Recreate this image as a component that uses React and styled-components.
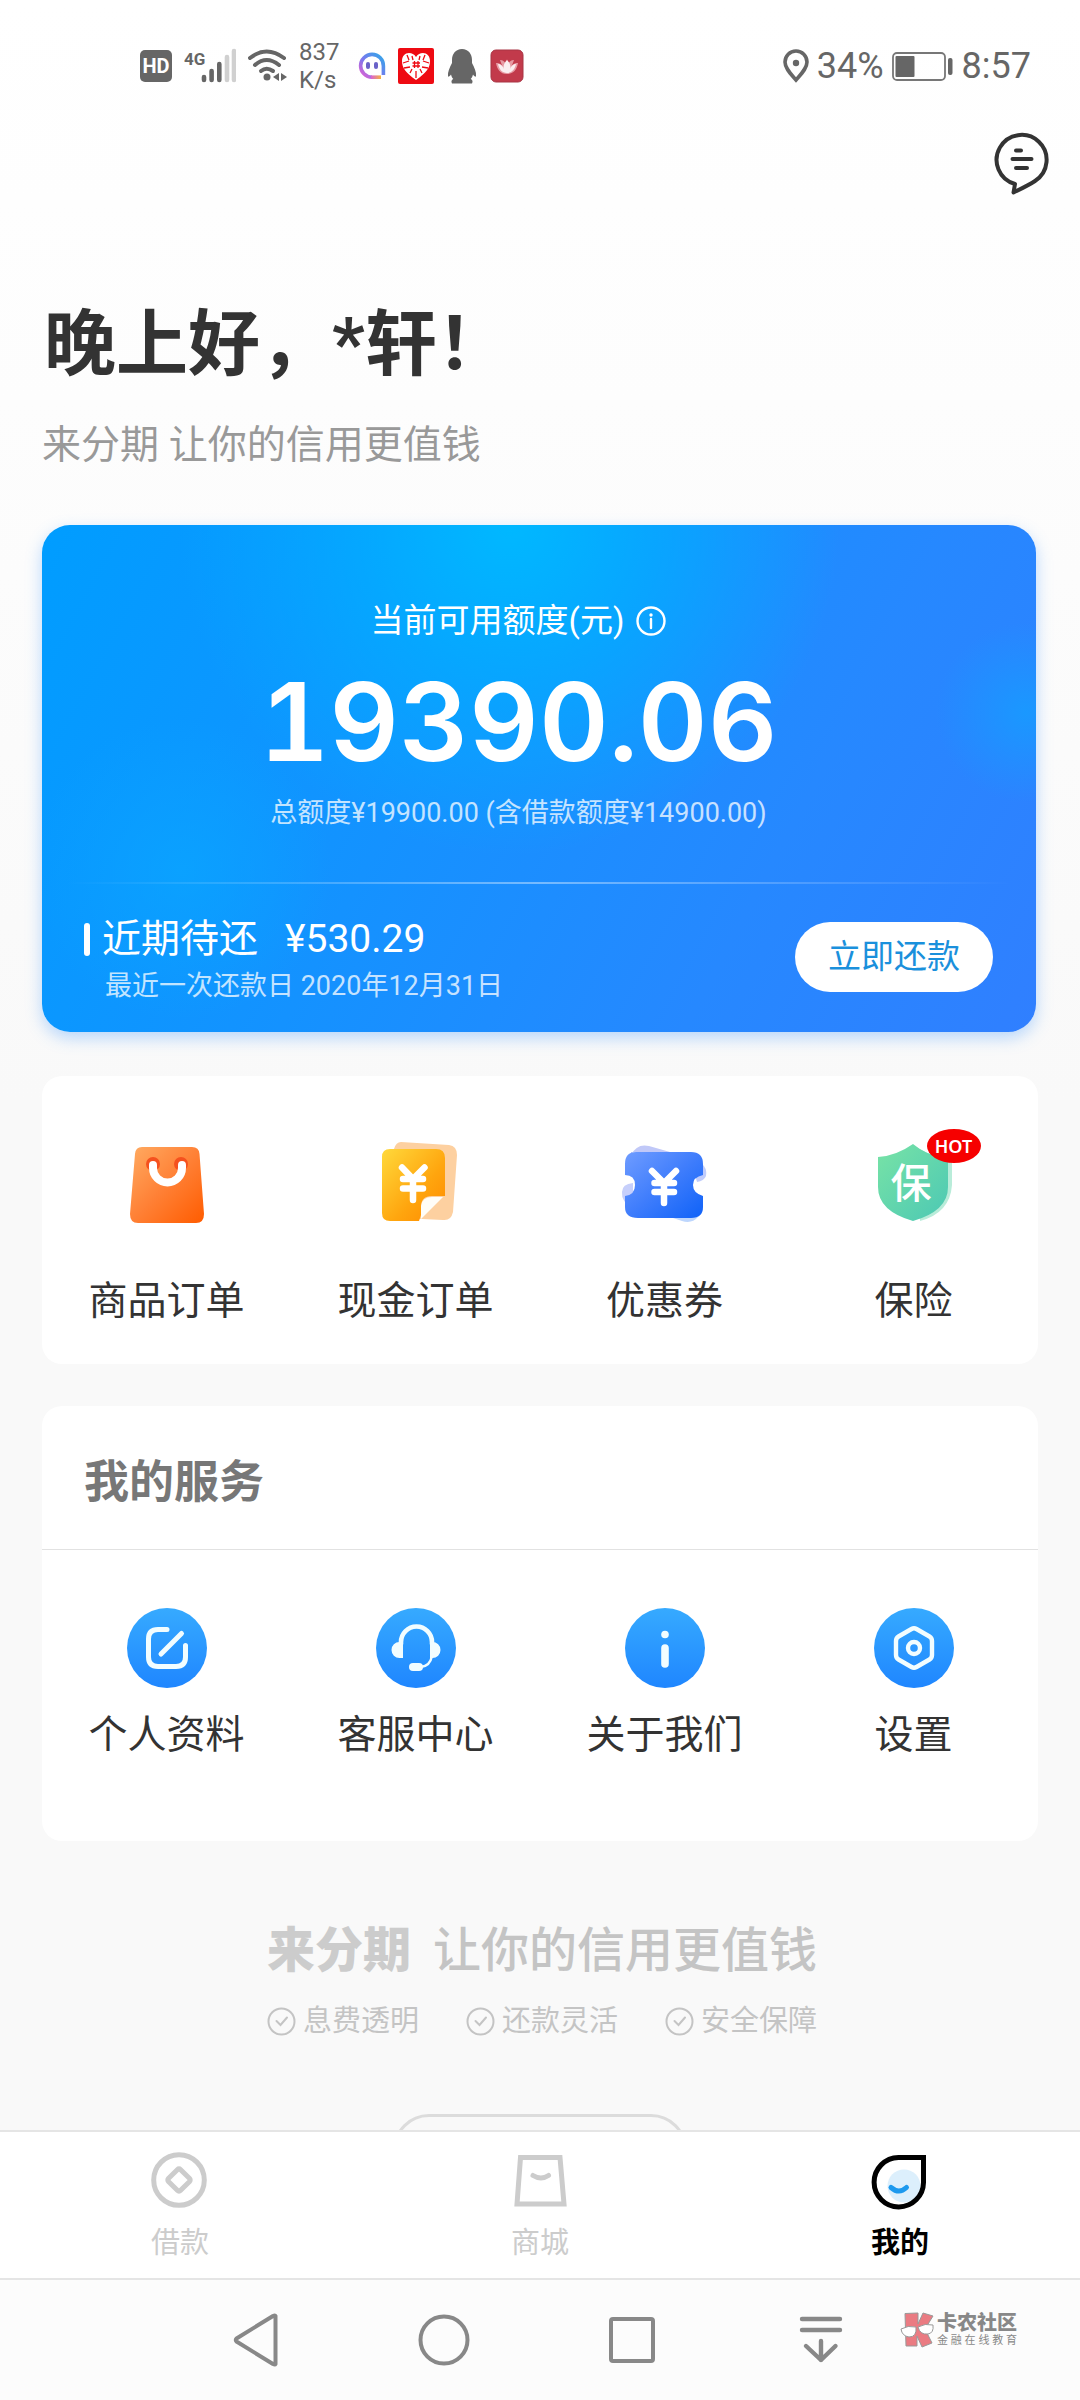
import React, { useState } from "react";
import styled, { createGlobalStyle } from "styled-components";

const GlobalStyle = createGlobalStyle`
  * {
    box-sizing: border-box;
  }

  body {
    margin: 0;
    font-family: Roboto, "Noto Sans CJK SC", sans-serif;
    color: #333;
  }

  button {
    border: 0;
    padding: 0;
    background: none;
    font: inherit;
    color: inherit;
    cursor: pointer;
  }

  svg {
    display: block;
    flex: none;
  }

  h1, h2, p {
    margin: 0;
  }
`;

const Screen = styled.div`
  display: flex;
  flex-direction: column;
  height: 100vh;
  background: linear-gradient(#ffffff 0, #fdfdfd 400px, #f9f9f9 1100px);
`;

const StatusBar = styled.header`
  display: flex;
  justify-content: space-between;
  flex: none;
  height: 132px;
  padding: 0 49px 0 140px;
  color: #666;
`;

const StatusGroup = styled.div`
  display: flex;
  align-items: center;
  gap: ${(props) => props.$gap};
  font-size: 36px;
`;

const HdBadge = styled.span`
  width: 32px;
  height: 32px;
  border-radius: 5px;
  background: #666;
  color: #fff;
  font-size: 20px;
  font-weight: 700;
  line-height: 32px;
  text-align: center;
`;

const Speed = styled.span`
  width: 47px;
  font-size: 24px;
  line-height: 28px;
`;

const SpeedLine = styled.span`
  display: block;
`;

const Content = styled.main`
  flex: 1;
  min-height: 0;
  overflow: hidden;
  padding: 0 42px;
`;

const TopActions = styled.div`
  display: flex;
  justify-content: flex-end;
  margin-right: -11px;
`;

const Greeting = styled.h1`
  margin-top: 107px;
  padding-left: 2px;
  font-size: 72px;
  font-weight: 700;
  line-height: 84px;
`;

const Tagline = styled.p`
  margin-top: 31px;
  font-size: 39px;
  line-height: 54px;
  color: #999;
`;

const CreditCard = styled.section`
  margin: 53px 2px 0 0;
  border-radius: 28px;
  color: #fff;
  background:
    radial-gradient(circle 330px at 47% 0, #00b8ff 0, #00b0ffaa 45%, #00a0ff00 100%),
    radial-gradient(circle 150px at 14% 68%, #0aa4ffcc 0, #0aa0ff00 100%),
    radial-gradient(circle 90px at 99% 37%, #1a98ff 0, #1a98ff00 100%),
    linear-gradient(118deg, #009dff 0, #1492ff 40%, #2688ff 72%, #307fff 100%);
  box-shadow: 0 6px 16px rgba(60, 150, 255, 0.35);
`;

const Limit = styled.div`
  display: flex;
  flex-direction: column;
  align-items: center;
  padding: 73px 41px 49px 0;
`;

const LimitLabel = styled.div`
  display: flex;
  align-items: center;
  gap: 12px;
  font-size: 33px;
  line-height: 46px;
`;

const LimitAmount = styled.div`
  margin-top: 23px;
  font-family: Inter, sans-serif;
  font-size: 108px;
  font-weight: 600;
  font-variant-numeric: tabular-nums;
  line-height: 110px;
`;

const SmallText = styled.p`
  font-size: 27px;
  line-height: 40px;
  color: rgba(255, 255, 255, 0.75);
`;

const LimitTotal = styled(SmallText)`
  margin-top: 16px;
`;

const CardDivider = styled.div`
  height: 2px;
  margin: 0 24px;
  background: linear-gradient(90deg, #ffffff00, #ffffff66 50%, #ffffff00);
`;

const Due = styled.div`
  display: flex;
  justify-content: space-between;
  align-items: flex-start;
  padding: 28px 43px 26px 42px;
`;

const DueTitle = styled.div`
  display: flex;
  align-items: center;
  font-size: 39px;
  line-height: 54px;

  &::before {
    content: "";
    width: 6px;
    height: 33px;
    margin-right: 12px;
    border-radius: 3px;
    background: #fff;
  }
`;

const DueAmount = styled.span`
  margin-left: 27px;
`;

const DueDate = styled(SmallText)`
  padding-left: 21px;
`;

const RepayButton = styled.button`
  height: 70px;
  margin-top: 10px;
  padding: 0 33px;
  border-radius: 35px;
  background: #fff;
  color: #1a90dc;
  font-size: 33px;
  line-height: 70px;
`;

const Panel = styled.section`
  margin-top: ${(props) => props.$top};
  border-radius: 20px;
  background: #fff;
`;

const PanelTitle = styled.h2`
  padding: 50px 42px 39px;
  border-bottom: 1px solid #e2e2e2;
  font-size: 45px;
  font-weight: 700;
  line-height: 54px;
  color: #777;
`;

const Shortcuts = styled.div`
  display: grid;
  grid-template-columns: repeat(4, 1fr);
  padding: ${(props) => props.$padding};
`;

const Shortcut = styled.button`
  display: flex;
  flex-direction: column;
  align-items: center;
  gap: ${(props) => props.$gap};
  font-size: 39px;
  line-height: 54px;
`;

const IconBox = styled.span`
  position: relative;
`;

const HotBadge = styled.span`
  position: absolute;
  top: -6px;
  right: -17px;
  width: 54px;
  height: 34px;
  border-radius: 50%;
  background: #f60000;
  color: #fff;
  font-family: "Noto Sans", sans-serif;
  font-size: 18px;
  font-weight: 600;
  line-height: 35px;
  text-align: center;
`;

const Footer = styled.footer`
  display: flex;
  flex-direction: column;
  align-items: center;
  margin-top: 80px;
  color: #c4c4c4;
`;

const FooterBlock = styled.div`
  width: 550px;
`;

const FooterRow = styled.div`
  display: flex;
  justify-content: space-between;
  margin: 0 -2px 0 2px;
`;

const Brand = styled.strong`
  font-size: 48px;
  font-weight: 900;
  line-height: 60px;
  color: #ccc;
`;

const Slogan = styled.span`
  font-size: 48px;
  font-weight: 500;
  line-height: 60px;
`;

const Promise = styled.span`
  display: flex;
  align-items: center;
  gap: 7px;
  margin-top: 20px;
  font-size: 29px;
  line-height: 40px;
`;

const Pill = styled.div`
  width: 294px;
  height: 72px;
  margin-top: 73px;
  border: 3px solid #dcdcdc;
  border-radius: 36px;
`;

const TabBar = styled.nav`
  display: grid;
  grid-template-columns: repeat(3, 1fr);
  flex: none;
  height: 150px;
  border-top: 2px solid #e5e5e5;
  border-bottom: 2px solid #e5e5e5;
  background: #fff;
`;

const Tab = styled.button`
  display: flex;
  flex-direction: column;
  align-items: center;
  gap: 15px;
  padding-top: 18px;
  font-size: 29px;
  font-weight: ${(props) => (props.$active ? 700 : 400)};
  line-height: 36px;
  color: ${(props) => (props.$active ? "#000" : "#ccc")};
`;

const SystemNav = styled.nav`
  position: relative;
  display: grid;
  grid-template-columns: repeat(4, 188px);
  justify-content: center;
  flex: none;
  height: 120px;
  padding-right: 4px;
  background: #fcfcfc;
`;

const SystemButton = styled.button`
  display: flex;
  justify-content: center;
  align-items: center;
`;

const Watermark = styled.div`
  position: absolute;
  top: 32px;
  right: 63px;
  display: flex;
  align-items: center;
  gap: 3px;
  color: #888;
`;

const WatermarkName = styled.strong`
  display: block;
  font-size: 20px;
  font-weight: 900;
  line-height: 22px;
`;

const WatermarkNote = styled.span`
  display: flex;
  justify-content: space-between;
  font-size: 11px;
  line-height: 14px;
`;

const SignalIcon = () => (
  <svg width="52" height="36" viewBox="0 0 52 36">
    <text x="0" y="17" fontSize="17" fontWeight="700" fontFamily="Roboto" fill="#666">4G</text>
    <g strokeWidth="4.6" strokeLinecap="round" stroke="#666">
      <path d="M20 29v3M27.600 23v9M35.300 16v16" />
      <path d="M43 9v23M50 3v29" stroke="#d0d0d0" />
    </g>
  </svg>
);

const WifiIcon = () => (
  <svg width="39" height="34" viewBox="0 0 39 34" fill="none" stroke="#666" strokeWidth="4" strokeLinecap="round">
    <path d="M2 9Q18.500-4 36 9" />
    <path d="M7 16Q18.500 6 31 16" />
    <path d="M13 22Q18.500 17.500 25 22" />
    <circle cx="19" cy="28" r="3.500" fill="#666" stroke="none" />
    <path d="M31 24v8l-6-4ZM33 24v8l6-4Z" fill="#666" stroke="none" />
  </svg>
);

const GhostIcon = () => (
  <svg width="28" height="28" viewBox="0 0 28 28">
    <defs>
      <linearGradient id="ghost" x1="0" y1="1" x2="1" y2="0">
        <stop offset="0" stopColor="#e85fd0" />
        <stop offset="0.45" stopColor="#7a78ee" />
        <stop offset="1" stopColor="#2ea8e8" />
      </linearGradient>
      <linearGradient id="ghostBase" gradientUnits="userSpaceOnUse" x1="12" y1="0" x2="23" y2="0">
        <stop offset="0" stopColor="#d65be0" />
        <stop offset="1" stopColor="#f5b340" />
      </linearGradient>
    </defs>
    <path d="M14 25.200A11.400 11.400 0 1 1 25.400 14V23" fill="none" stroke="url(#ghost)" strokeWidth="3.600" />
    <path d="M13 25.200H23" stroke="url(#ghostBase)" strokeWidth="3.600" />
    <rect x="8" y="10" width="4" height="7" rx="2" fill="#6a62c8" />
    <rect x="16" y="10" width="4" height="7" rx="2" fill="#6a62c8" />
  </svg>
);

const HeartIcon = () => (
  <svg width="36" height="36" viewBox="0 0 36 36">
    <rect width="36" height="36" rx="2" fill="#ee0a12" />
    <path d="M18 32C8 25 4 20 4 13c0-5 3-8 7-8 3 0 5 1 7 4 2-3 4-4 7-4 4 0 7 3 7 8 0 7-4 12-14 19Z" fill="#fff" />
    <path d="M5 15l6-2M9 7l2 5M27 7l-2 5M31 15l-6-2M6 20l6-1M30 20l-6-1M12 25l2-4M24 25l-2-4M18 23v7M14 8l1 4M22 8l-1 4" fill="none" stroke="#ee0a12" strokeWidth="1.300" />
    <path d="M16.500 13v7M20 13v7M14.500 15h7.500M14.500 18h7.500" stroke="#ee0a12" strokeWidth="1.300" />
  </svg>
);

const PenguinIcon = () => (
  <svg width="32" height="36" viewBox="0 0 32 36">
    <path d="M16 1c6.500 0 10 5 10 11v3c2.500 5 4.500 9 4 13-.3 1.500-1.500.5-3-1.500-.5 2-1 3-2.300 4.500 2 1 2.300 2.500 1.300 4.500H6c-1-2-.7-3.500 1.300-4.500C6 29.500 5.500 28.500 5 26.500c-1.500 2-2.700 3-3 1.500-.5-4 1.500-8 4-13v-3C6 6 9.500 1 16 1Z" fill="#666" />
  </svg>
);

const LotusIcon = () => (
  <svg width="34" height="34" viewBox="0 0 34 34">
    <rect x="1" y="1" width="32" height="32" rx="5" fill="#c23a4b" stroke="#a83444" />
    <path d="M6 14c4 0 6 2 7 5l-3-8c3 0 5 2 6 4l1-5 1 5c1-2 3-4 6-4l-3 8c1-3 3-5 7-5-1 6-4 11-11 11S7 20 6 14Z" fill="#e79aa3" />
    <path d="M17 11c3 3 4 6 3 9 1-3 3-5 6-5-1 5-4 9-9 9s-8-4-9-9c3 0 5 2 6 5-1-3 0-6 3-9Z" fill="#fbeef0" />
  </svg>
);

const PinIcon = () => (
  <svg width="26" height="34" viewBox="0 0 26 34" fill="none" stroke="#666">
    <path d="M13 31C7 24 2 19 2 13a11 11 0 0 1 22 0c0 6-5 11-11 18Z" strokeWidth="3.600" />
    <circle cx="13" cy="14" r="3.200" fill="#666" stroke="none" />
  </svg>
);

const BatteryIcon = () => (
  <svg width="62" height="30" viewBox="0 0 62 30">
    <rect x="1" y="2" width="52" height="27" rx="4" fill="none" stroke="#777" strokeWidth="1.800" />
    <rect x="3.500" y="5" width="19" height="21" rx="1" fill="#666" />
    <rect x="56" y="7" width="4.500" height="17" rx="2" fill="#666" />
  </svg>
);

const MessageIcon = () => (
  <svg width="56" height="64" viewBox="0 0 56 64" fill="none" stroke="#333" strokeWidth="4" strokeLinecap="round">
    <path d="M22 52A25 25 0 1 1 42 49Q36 53 20.500 60.500Z" strokeLinejoin="round" />
    <path d="M23 18.500h5M19.500 27h19M23 36h11" />
  </svg>
);

const InfoIcon = () => (
  <svg width="30" height="30" viewBox="0 0 30 30" fill="none" stroke="#fff">
    <circle cx="15" cy="15" r="13.500" strokeWidth="2.400" />
    <path d="M15 13v9" strokeWidth="2.400" strokeLinecap="round" />
    <circle cx="15" cy="9" r="1.700" fill="#fff" stroke="none" />
  </svg>
);

const BagIcon = () => (
  <svg width="100" height="100" viewBox="0 0 100 100">
    <defs>
      <linearGradient id="bag" x1="0" y1="0" x2="1" y2="1">
        <stop offset="0" stopColor="#ffab62" />
        <stop offset="0.5" stopColor="#ff8035" />
        <stop offset="1" stopColor="#ff5c00" />
      </linearGradient>
    </defs>
    <path d="M25 12H75Q82 12 82.500 19L87 79Q87 88 79 88H21Q13 88 13 79L18 19Q18.500 12 25 12Z" fill="url(#bag)" />
    <circle cx="36" cy="29" r="7" fill="#f5511e" />
    <circle cx="64" cy="29" r="7" fill="#f5511e" />
    <path d="M36 30V33a14.500 14.500 0 0 0 29 0V30" fill="none" stroke="#fff" strokeWidth="8" strokeLinecap="round" />
  </svg>
);

const CashIcon = () => (
  <svg width="100" height="100" viewBox="0 0 100 100">
    <defs>
      <linearGradient id="cash" x1="0" y1="0" x2="1" y2="1">
        <stop offset="0" stopColor="#ffd93b" />
        <stop offset="0.6" stopColor="#ffa50e" />
        <stop offset="1" stopColor="#ff8a00" />
      </linearGradient>
    </defs>
    <path d="M35 7L83 10Q91 11 91 20L87 77Q85 86 77 85L35 83 28 14Q30 7 35 7Z" fill="#fdd0a0" />
    <path d="M24 14H70Q79 14 79 23V61H66Q55 61 55 72V80L53 86H24Q16 86 16 78V22Q16 14 24 14Z" fill="url(#cash)" />
    <path d="M55 84V71Q56 62 66 62H77Z" fill="#fffdf8" />
    <path d="M36 32.500L47 44L58.500 32.500M47 44V65M37 44H57M37 53.500H57" fill="none" stroke="#fff" strokeWidth="6.500" strokeLinecap="round" />
  </svg>
);

const CouponIcon = () => (
  <svg width="100" height="100" viewBox="0 0 100 100">
    <defs>
      <linearGradient id="coupon" x1="0" y1="0" x2="1" y2="1">
        <stop offset="0" stopColor="#6f9cff" />
        <stop offset="0.5" stopColor="#3f7dfc" />
        <stop offset="1" stopColor="#0f62f8" />
      </linearGradient>
    </defs>
    <path d="M16 20Q22 8 34 11L55 17H16Z" fill="#c0c8f8" />
    <path d="M80 25Q93 30 91 41Q89 46 82 47L80 40Z" fill="#c0ccfb" />
    <path d="M7 57Q7 49 18 48L18 75Q6 66 7 57Z" fill="#c6cffb" />
    <path d="M55 82H83Q77 89 67 86Z" fill="#bdd6fd" />
    <path d="M21 17H76Q88 17 88 29V40Q78 42 78 50T88 61V72Q88 83 76 83H23Q10 83 10 72V61Q20 60 20 50T10 40V29Q10 17 21 17Z" fill="url(#coupon)" />
    <path d="M37 36L49 48L61 36M49 48V68M39.500 48H59M39.500 57H59" fill="none" stroke="#fff" strokeWidth="6.500" strokeLinecap="round" />
  </svg>
);

const ShieldIcon = () => (
  <svg width="100" height="100" viewBox="0 0 100 100">
    <defs>
      <linearGradient id="shield" x1="0" y1="0" x2="1" y2="1">
        <stop offset="0" stopColor="#78e3a6" />
        <stop offset="1" stopColor="#4cc8b4" />
      </linearGradient>
    </defs>
    <path d="M52 12Q68 22 88 24L88 50Q86 78 56 86Z" fill="#b9ecd9" />
    <path d="M49 9Q62 20 79 22Q84 22 84 27V52Q84 76 49 86Q14 76 14 52V22Q32 21 49 9Z" fill="url(#shield)" />
    <text x="47" y="63" fontSize="41" fontWeight="500" fontFamily="Noto Sans CJK SC" fill="#fff" textAnchor="middle">保</text>
  </svg>
);

// blue round base shared by all the service icons
const RoundIcon = ({ id, children }) => (
  <svg width="80" height="80" viewBox="0 0 80 80" fill="none" stroke="#f2fdff" strokeLinecap="round">
    <defs>
      <linearGradient id={id} x1="0" y1="0" x2="0" y2="1">
        <stop offset="0" stopColor="#36aaff" />
        <stop offset="1" stopColor="#1f86ff" />
      </linearGradient>
    </defs>
    <circle cx="40" cy="40" r="40" fill={`url(#${id})`} stroke="none" />
    {children}
  </svg>
);

const ProfileIcon = () => (
  <RoundIcon id="profile">
    <path d="M40 21.500H31Q21.500 21.500 21.500 31V49Q21.500 58.500 31 58.500H49Q58.500 58.500 58.500 49V37.500M54.500 25.500L34 46" strokeWidth="5" />
  </RoundIcon>
);

const ServiceIcon = () => (
  <RoundIcon id="service">
    <path d="M25 36V34a15.500 15.500 0 0 1 31 0V36" strokeWidth="4.600" />
    <path d="M27 33.500V50H23.500a8 8 0 0 1 0-16ZM54 33.500V50H56.500a8 8 0 0 0 0-16Z" fill="#f2fdff" stroke="none" />
    <path d="M56 48Q54 58 45 59" strokeWidth="2.400" />
    <path d="M37 59H43" strokeWidth="8" />
  </RoundIcon>
);

const AboutIcon = () => (
  <RoundIcon id="about">
    <circle cx="40" cy="26.500" r="3.800" fill="#f2fdff" stroke="none" />
    <path d="M40 40V56" strokeWidth="7.600" />
  </RoundIcon>
);

const SettingsIcon = () => (
  <RoundIcon id="settings">
    <path d="M37.500 21Q40 19.500 42.500 21L55.500 28.500Q58 30 58 33V47Q58 50 55.500 51.500L42.500 59Q40 60.500 37.500 59L24.500 51.500Q22 50 22 47V33Q22 30 24.500 28.500Z" strokeWidth="4.400" />
    <circle cx="40" cy="40" r="6" strokeWidth="4.400" />
  </RoundIcon>
);

const CheckIcon = () => (
  <svg width="29" height="29" viewBox="0 0 29 29" fill="none" stroke="#c4c4c4" strokeWidth="2">
    <circle cx="14.500" cy="14.500" r="13" />
    <path d="M9.500 14l4 4 6.500-7.500" strokeLinecap="round" />
  </svg>
);

const LoanIcon = () => (
  <svg width="60" height="60" viewBox="0 0 60 60" fill="none" stroke="#ccc" strokeWidth="5">
    <circle cx="29" cy="30" r="25.300" />
    <rect x="20.500" y="21.500" width="17" height="17" rx="2" transform="rotate(45 29 30)" />
  </svg>
);

const MallIcon = () => (
  <svg width="60" height="60" viewBox="0 0 60 60" fill="none" stroke="#ccc" strokeWidth="5">
    <path d="M10.500 7.500H50L54 54H7Z" />
    <path d="M23 25.500Q31 30.500 38.500 25.500" strokeLinecap="round" />
  </svg>
);

const MineIcon = () => (
  <svg width="60" height="60" viewBox="0 0 60 60" fill="none">
    <circle cx="34" cy="36" r="16.500" fill="#dceffc" />
    <path d="M28.500 7.500H53.500V32.500A24.700 24.700 0 1 1 28.500 7.500Z" stroke="#000" strokeWidth="5" />
    <path d="M21 37.500Q29 44.500 36.500 37.500" stroke="#1c99ee" strokeWidth="5" strokeLinecap="round" />
  </svg>
);

const BackIcon = () => (
  <svg width="56" height="56" viewBox="0 0 56 56" fill="none" stroke="#888" strokeWidth="4" strokeLinejoin="round">
    <path d="M47.500 4V52Q47 53 45 52L8.500 29.500Q7 28 8.500 26.500L45 4Q47 3 47.500 4Z" />
  </svg>
);

const HomeIcon = () => (
  <svg width="56" height="56" viewBox="0 0 56 56" fill="none" stroke="#888" strokeWidth="4">
    <circle cx="28" cy="28" r="23.500" />
  </svg>
);

const RecentIcon = () => (
  <svg width="56" height="56" viewBox="0 0 56 56" fill="none" stroke="#888" strokeWidth="4">
    <rect x="7" y="7" width="42" height="42" rx="2" />
  </svg>
);

const PullDownIcon = () => (
  <svg width="56" height="56" viewBox="0 0 56 56" fill="none" stroke="#888" strokeWidth="4.400" strokeLinecap="round" strokeLinejoin="round">
    <path d="M10 7H48M10 18H48M29 29V48M14 34L29 48L43.500 34" />
  </svg>
);

const WatermarkIcon = () => (
  <svg width="34" height="36" viewBox="0 0 34 36">
    <path d="M5 1.500L18 1 18 12 23 1 33 4 25 17 32 31 22 35 17 24 17 34 6 34Z" fill="#ea7b82" stroke="#999" />
    <path d="M1 17Q8 13 16 15Q17 25 9 25Q2 24 1 17ZM18 15Q25 11 33 13Q34 21 28 22Q20 23 18 15Z" fill="#fff" stroke="#999" />
  </svg>
);

const orders = [
  { label: "商品订单", Icon: BagIcon },
  { label: "现金订单", Icon: CashIcon },
  { label: "优惠券", Icon: CouponIcon },
  { label: "保险", Icon: ShieldIcon, hot: true },
];

const services = [
  { label: "个人资料", Icon: ProfileIcon },
  { label: "客服中心", Icon: ServiceIcon },
  { label: "关于我们", Icon: AboutIcon },
  { label: "设置", Icon: SettingsIcon },
];

const promises = ["息费透明", "还款灵活", "安全保障"];

const tabs = [
  { label: "借款", Icon: LoanIcon },
  { label: "商城", Icon: MallIcon },
  { label: "我的", Icon: MineIcon },
];

const systemButtons = [BackIcon, HomeIcon, RecentIcon, PullDownIcon];

const App = () => {
  const [activeTab, setActiveTab] = useState("我的");

  return (
    <>
      <GlobalStyle />
      <Screen>
        <StatusBar>
          <StatusGroup $gap="12px">
            <HdBadge>HD</HdBadge>
            <SignalIcon />
            <WifiIcon />
            <Speed>
              <SpeedLine>837</SpeedLine>
              <SpeedLine>K/s</SpeedLine>
            </Speed>
            <GhostIcon />
            <HeartIcon />
            <PenguinIcon />
            <LotusIcon />
          </StatusGroup>
          <StatusGroup $gap="8px">
            <PinIcon />
            <span>34%</span>
            <BatteryIcon />
            <span>8:57</span>
          </StatusGroup>
        </StatusBar>

        <Content>
          <TopActions>
            <button type="button">
              <MessageIcon />
            </button>
          </TopActions>

          <Greeting>晚上好，*轩！</Greeting>
          <Tagline>来分期 让你的信用更值钱</Tagline>

          <CreditCard>
            <Limit>
              <LimitLabel>
                当前可用额度(元)
                <InfoIcon />
              </LimitLabel>
              <LimitAmount>19390.06</LimitAmount>
              <LimitTotal>总额度¥19900.00 (含借款额度¥14900.00)</LimitTotal>
            </Limit>
            <CardDivider />
            <Due>
              <div>
                <DueTitle>
                  近期待还
                  <DueAmount>¥530.29</DueAmount>
                </DueTitle>
                <DueDate>最近一次还款日 2020年12月31日</DueDate>
              </div>
              <RepayButton type="button">立即还款</RepayButton>
            </Due>
          </CreditCard>

          <Panel $top="44px">
            <Shortcuts $padding="59px 0 36px">
              {orders.map(({ label, Icon, hot }) => (
                <Shortcut key={label} type="button" $gap="39px">
                  <IconBox>
                    <Icon />
                    {hot && <HotBadge>HOT</HotBadge>}
                  </IconBox>
                  {label}
                </Shortcut>
              ))}
            </Shortcuts>
          </Panel>

          <Panel $top="42px">
            <PanelTitle>我的服务</PanelTitle>
            <Shortcuts $padding="58px 0 79px">
              {services.map(({ label, Icon }) => (
                <Shortcut key={label} type="button" $gap="20px">
                  <Icon />
                  {label}
                </Shortcut>
              ))}
            </Shortcuts>
          </Panel>

          <Footer>
            <FooterBlock>
              <FooterRow>
                <Brand>来分期</Brand>
                <Slogan>让你的信用更值钱</Slogan>
              </FooterRow>
              <FooterRow>
                {promises.map((text) => (
                  <Promise key={text}>
                    <CheckIcon />
                    {text}
                  </Promise>
                ))}
              </FooterRow>
            </FooterBlock>
            <Pill />
          </Footer>
        </Content>

        <TabBar>
          {tabs.map(({ label, Icon }) => (
            <Tab
              key={label}
              type="button"
              $active={label === activeTab}
              onClick={() => setActiveTab(label)}
            >
              <Icon />
              {label}
            </Tab>
          ))}
        </TabBar>

        <SystemNav>
          {systemButtons.map((Icon, index) => (
            <SystemButton key={index} type="button">
              <Icon />
            </SystemButton>
          ))}
          <Watermark>
            <WatermarkIcon />
            <div>
              <WatermarkName>卡农社区</WatermarkName>
              <WatermarkNote>
                {[..."金融在线教育"].map((char) => (
                  <span key={char}>{char}</span>
                ))}
              </WatermarkNote>
            </div>
          </Watermark>
        </SystemNav>
      </Screen>
    </>
  );
};

export default App;
